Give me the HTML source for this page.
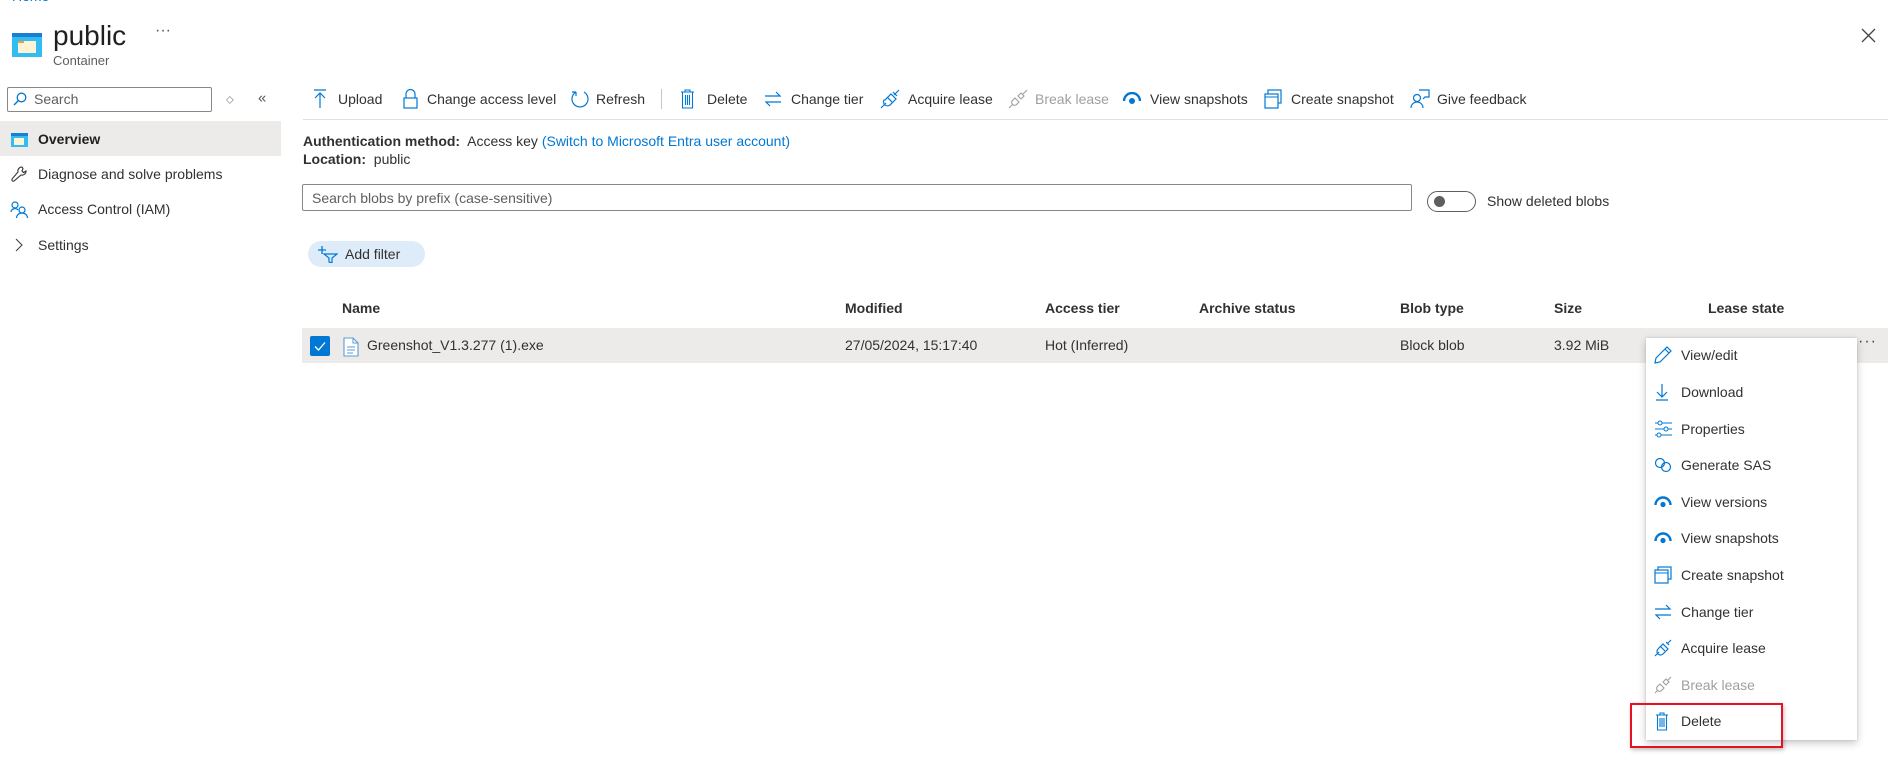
<!DOCTYPE html>
<html><head><meta charset="utf-8"><style>
*{margin:0;padding:0;box-sizing:border-box}
body{width:1888px;height:783px;overflow:hidden;background:#fff;font-family:"Liberation Sans",sans-serif;font-size:14px;color:#323130;position:relative}
.a{position:absolute;white-space:nowrap}
.c{transform:translateY(-50%)}
svg{position:absolute}
.b{color:#0078d4}
.tb{position:absolute;top:90px;height:18px;line-height:18px;font-size:14px}
.mi{position:absolute;left:1681px;font-size:14px;transform:translateY(-50%)}
.hd{position:absolute;top:300px;font-weight:bold;font-size:14px;color:#323130}
.cell{position:absolute;top:337px;font-size:14px}
</style></head><body>
<div class="a" style="left:12px;top:-12px;font-size:14px;color:#0078d4">Home &nbsp;<span style="color:#999">&gt;</span></div>
<!-- container icon -->
<svg style="left:12px;top:33px" width="30" height="24" viewBox="0 0 30 24"><rect width="30" height="24" fill="#32bdf0"/><rect width="30" height="4" fill="#1a7fd4"/><rect x="6" y="8" width="18" height="12" fill="#fff3d6"/><rect x="6" y="8" width="6" height="2" fill="#f0a030"/></svg>
<div class="a" style="left:53px;top:20px;font-size:28px;color:#201f1e">public</div>
<div class="a" style="left:155px;top:22px;font-size:16px;color:#555">···</div>
<div class="a" style="left:53px;top:53px;font-size:13px;color:#605e5c">Container</div>
<svg style="left:1861px;top:28px" width="15" height="15"><path d="M1 1L14 14M14 1L1 14" stroke="#444" stroke-width="1.3"/></svg>

<!-- sidebar -->
<div class="a" style="left:7px;top:87px;width:205px;height:25px;border:1px solid #8a8886;border-radius:2px"></div>
<svg style="left:13px;top:92px" width="14" height="14"><circle cx="8.5" cy="5.5" r="4.3" fill="none" stroke="#0078d4" stroke-width="1.3"/><path d="M5.5 8.5L1 13" stroke="#0078d4" stroke-width="1.4"/></svg>
<div class="a c" style="left:34px;top:99px;color:#605e5c">Search</div>
<div class="a c" style="left:226px;top:100px;font-size:10px;color:#777">◇</div>
<div class="a c" style="left:258px;top:98px;font-size:15px;color:#555">«</div>
<div class="a" style="left:0;top:121px;width:281px;height:35px;background:#edebe9"></div>
<svg style="left:11px;top:133px" width="17" height="14"><rect width="17" height="14" fill="#32bdf0"/><rect width="17" height="3" fill="#1a7fd4"/><rect x="3" y="5" width="10" height="7" fill="#fff3d6"/></svg>
<div class="a c" style="left:38px;top:139px;font-weight:bold;color:#201f1e">Overview</div>
<svg style="left:10px;top:165px" width="18" height="18"><path d="M12 2a4 4 0 0 0-4 5L2 14a1.5 1.5 0 0 0 2 2l7-6a4 4 0 0 0 5-4l-2.5 1.5L12 6l1-2.5z" fill="none" stroke="#333" stroke-width="1.1"/></svg>
<div class="a c" style="left:38px;top:174px">Diagnose and solve problems</div>
<svg style="left:10px;top:201px" width="19" height="17"><circle cx="5" cy="4" r="3" fill="none" stroke="#0078d4" stroke-width="1.2"/><path d="M1 11a4 4 0 0 1 7-2" fill="none" stroke="#0078d4" stroke-width="1.2"/><circle cx="12" cy="9" r="3" fill="none" stroke="#0078d4" stroke-width="1.2"/><path d="M6.5 17a5.5 5 0 0 1 11 0" fill="none" stroke="#0078d4" stroke-width="1.2"/></svg>
<div class="a c" style="left:38px;top:209px">Access Control (IAM)</div>
<svg style="left:15px;top:238px" width="8" height="14"><path d="M1 1L7 7L1 13" fill="none" stroke="#444" stroke-width="1.1"/></svg>
<div class="a c" style="left:38px;top:245px">Settings</div>

<!-- toolbar -->
<svg style="left:313px;top:89px" width="14" height="20"><path d="M1 1H13M7 4V19M2 9L7 4L12 9" fill="none" stroke="#0078d4" stroke-width="1.2"/></svg>
<div class="tb" style="left:338px">Upload</div>
<svg style="left:403px;top:89px" width="15" height="20"><path d="M3 9V5a4.5 4.5 0 0 1 9 0v4" fill="none" stroke="#0078d4" stroke-width="1.2"/><rect x="1" y="9" width="13" height="10" fill="none" stroke="#0078d4" stroke-width="1.2"/></svg>
<div class="tb" style="left:427px">Change access level</div>
<svg style="left:570px;top:89px" width="20" height="20"><path d="M6 3A8 8 0 1 0 14 3M6 3V7M6 3H2" fill="none" stroke="#0078d4" stroke-width="1.2"/></svg>
<div class="tb" style="left:596px">Refresh</div>
<div class="a" style="left:661px;top:89px;width:1px;height:20px;background:#c8c6c4"></div>
<svg style="left:680px;top:89px" width="15" height="20"><path d="M1 3H14M5 3V1H10V3M2.5 3V19H12.5V3M5.5 6V16M7.5 6V16M9.5 6V16" fill="none" stroke="#0078d4" stroke-width="1.1"/></svg>
<div class="tb" style="left:707px">Delete</div>
<svg style="left:764px;top:90px" width="18" height="18"><path d="M1 6H16L12 2M17 12H2L6 16" fill="none" stroke="#0078d4" stroke-width="1.2"/></svg>
<div class="tb" style="left:791px">Change tier</div>
<svg style="left:880px;top:89px" width="20" height="20"><path d="M1 19L6 14M14 6L19 1M7 8L12 13M4 11a4 4 0 0 0 6 5l6-6-5-5-6 6zM13 3l4 4" fill="none" stroke="#0078d4" stroke-width="1.2"/></svg>
<div class="tb" style="left:908px">Acquire lease</div>
<svg style="left:1008px;top:89px" width="20" height="20"><path d="M1 19L5 15M15 5L19 1M4 12a3 3 0 0 0 4 4l3-3-4-4zM13 4l3 3-3 3-3-3z" fill="none" stroke="#a19f9d" stroke-width="1.1"/></svg>
<div class="tb" style="left:1035px;color:#a19f9d">Break lease</div>
<svg style="left:1123px;top:92px" width="18" height="14"><path d="M1 9a8 8 0 0 1 16 0" fill="none" stroke="#0078d4" stroke-width="2.4"/><circle cx="9" cy="9" r="3" fill="#0078d4"/></svg>
<div class="tb" style="left:1150px">View snapshots</div>
<svg style="left:1264px;top:89px" width="18" height="20"><rect x="4" y="1" width="13" height="13" fill="none" stroke="#0078d4" stroke-width="1.2"/><rect x="1" y="5" width="13" height="14" fill="#fff" stroke="#0078d4" stroke-width="1.2"/><path d="M1 8H14" stroke="#0078d4"/></svg>
<div class="tb" style="left:1291px">Create snapshot</div>
<svg style="left:1410px;top:89px" width="20" height="20"><circle cx="7" cy="9" r="3.5" fill="none" stroke="#0078d4" stroke-width="1.2"/><path d="M1 19a6 6 0 0 1 12 0M9 1H19V8H15L13 10" fill="none" stroke="#0078d4" stroke-width="1.2"/></svg>
<div class="tb" style="left:1437px">Give feedback</div>
<div class="a" style="left:303px;top:119px;width:1585px;height:1px;background:#e1dfdd"></div>

<div class="a c" style="left:303px;top:141px"><b>Authentication method:</b>&nbsp; Access key <span class="b">(Switch to Microsoft Entra user account)</span></div>
<div class="a c" style="left:303px;top:159px"><b>Location:</b>&nbsp; public</div>
<div class="a" style="left:302px;top:184px;width:1110px;height:27px;border:1px solid #8a8886;border-radius:2px"></div>
<div class="a c" style="left:312px;top:198px;color:#605e5c">Search blobs by prefix (case-sensitive)</div>
<div class="a" style="left:1427px;top:191px;width:49px;height:21px;border:1px solid #605e5c;border-radius:11px"></div>
<div class="a" style="left:1434px;top:196px;width:11px;height:11px;border-radius:50%;background:#605e5c"></div>
<div class="a c" style="left:1487px;top:201px">Show deleted blobs</div>
<div class="a" style="left:308px;top:241px;width:117px;height:26px;border-radius:13px;background:#deecf9"></div>
<svg style="left:318px;top:245px" width="20" height="18"><path d="M4 1V9M0 5H8" stroke="#0078d4" stroke-width="1.3"/><path d="M6 9H19L14 13V18L11 17V13Z" fill="none" stroke="#0078d4" stroke-width="1.2"/></svg>
<div class="a c" style="left:345px;top:254px">Add filter</div>

<!-- table -->
<div class="hd" style="left:342px">Name</div>
<div class="hd" style="left:845px">Modified</div>
<div class="hd" style="left:1045px">Access tier</div>
<div class="hd" style="left:1199px">Archive status</div>
<div class="hd" style="left:1400px">Blob type</div>
<div class="hd" style="left:1554px">Size</div>
<div class="hd" style="left:1708px">Lease state</div>
<div class="a" style="left:302px;top:328px;width:1586px;height:35px;background:#edebe9"></div>
<div class="a" style="left:310px;top:336px;width:20px;height:20px;background:#0078d4;border-radius:2px"></div>
<svg style="left:313px;top:339px" width="14" height="14"><path d="M2 7.5L5.5 11L12 3.5" fill="none" stroke="#fff" stroke-width="1.3"/></svg>
<svg style="left:343px;top:337px" width="16" height="20"><path d="M1 1H10L15 6V19H1Z" fill="#fff" stroke="#5b9bd5" stroke-width="1.1"/><path d="M10 1V6H15" fill="none" stroke="#5b9bd5"/><path d="M4 10H12M4 13H12M4 16H10" stroke="#5b9bd5"/></svg>
<div class="cell" style="left:367px">Greenshot_V1.3.277 (1).exe</div>
<div class="cell" style="left:845px">27/05/2024, 15:17:40</div>
<div class="cell" style="left:1045px">Hot (Inferred)</div>
<div class="cell" style="left:1400px">Block blob</div>
<div class="cell" style="left:1554px">3.92 MiB</div>
<div class="a" style="left:1858px;top:333px;font-size:16px;color:#444;letter-spacing:1px">···</div>

<!-- context menu -->
<div class="a" style="left:1646px;top:338px;width:211px;height:402px;background:#fff;box-shadow:0 3px 8px rgba(0,0,0,.22),0 0 2px rgba(0,0,0,.15)"></div>
<svg style="left:1654px;top:346px" width="18" height="18"><path d="M1 17L2 12L13 1L17 5L6 16ZM11 3L15 7" fill="none" stroke="#0078d4" stroke-width="1.2"/></svg>
<div class="mi" style="top:355px">View/edit</div>
<svg style="left:1655px;top:383px" width="14" height="18"><path d="M7 1V14M2 9L7 14L12 9M1 17H13" fill="none" stroke="#0078d4" stroke-width="1.2"/></svg>
<div class="mi" style="top:392px">Download</div>
<svg style="left:1654px;top:420px" width="18" height="18"><path d="M1 3H18M1 9H18M1 15H18" stroke="#0078d4"/><circle cx="6" cy="3" r="2" fill="#fff" stroke="#0078d4"/><circle cx="12" cy="9" r="2" fill="#fff" stroke="#0078d4"/><circle cx="5" cy="15" r="2" fill="#fff" stroke="#0078d4"/></svg>
<div class="mi" style="top:429px">Properties</div>
<svg style="left:1654px;top:457px" width="18" height="16"><circle cx="6" cy="6" r="4.5" fill="none" stroke="#0078d4" stroke-width="1.2"/><circle cx="12" cy="10" r="4.5" fill="none" stroke="#0078d4" stroke-width="1.2"/></svg>
<div class="mi" style="top:465px">Generate SAS</div>
<svg style="left:1654px;top:496px" width="18" height="12"><path d="M1.5 9a7.5 7.5 0 0 1 15 0" fill="none" stroke="#0078d4" stroke-width="2.4"/><circle cx="9" cy="8.5" r="2.6" fill="#0078d4"/></svg>
<div class="mi" style="top:502px">View versions</div>
<svg style="left:1654px;top:532px" width="18" height="12"><path d="M1.5 9a7.5 7.5 0 0 1 15 0" fill="none" stroke="#0078d4" stroke-width="2.4"/><circle cx="9" cy="8.5" r="2.6" fill="#0078d4"/></svg>
<div class="mi" style="top:538px">View snapshots</div>
<svg style="left:1654px;top:566px" width="18" height="18"><rect x="4" y="1" width="13" height="12" fill="none" stroke="#0078d4" stroke-width="1.2"/><rect x="1" y="4" width="13" height="13" fill="#fff" stroke="#0078d4" stroke-width="1.2"/><path d="M1 7H14" stroke="#0078d4"/></svg>
<div class="mi" style="top:575px">Create snapshot</div>
<svg style="left:1654px;top:604px" width="18" height="16"><path d="M1 5H16L12 1M17 11H2L6 15" fill="none" stroke="#0078d4" stroke-width="1.2"/></svg>
<div class="mi" style="top:612px">Change tier</div>
<svg style="left:1654px;top:639px" width="18" height="18"><path d="M1 17L5 13M13 5L17 1M6 7L11 12M4 10a3.5 3.5 0 0 0 5 5l5-5-5-5zM12 3l3 3" fill="none" stroke="#0078d4" stroke-width="1.2"/></svg>
<div class="mi" style="top:648px">Acquire lease</div>
<svg style="left:1654px;top:676px" width="18" height="18"><path d="M1 17L4 14M14 4L17 1M3 11a3 3 0 0 0 4 4l3-3-4-4zM12 3l3 3-3 3-3-3z" fill="none" stroke="#a19f9d" stroke-width="1.1"/></svg>
<div class="mi" style="top:685px;color:#a19f9d">Break lease</div>
<svg style="left:1655px;top:712px" width="14" height="19"><path d="M1 3H13M5 3V1H9V3M2.5 3V18H11.5V3M5 6V15M7 6V15M9 6V15" fill="none" stroke="#0078d4" stroke-width="1.1"/></svg>
<div class="mi" style="top:721px">Delete</div>
<div class="a" style="left:1630px;top:703px;width:153px;height:45px;border:2px solid #e81123;box-shadow:1px 2px 4px rgba(0,0,0,.25)"></div>
</body></html>
